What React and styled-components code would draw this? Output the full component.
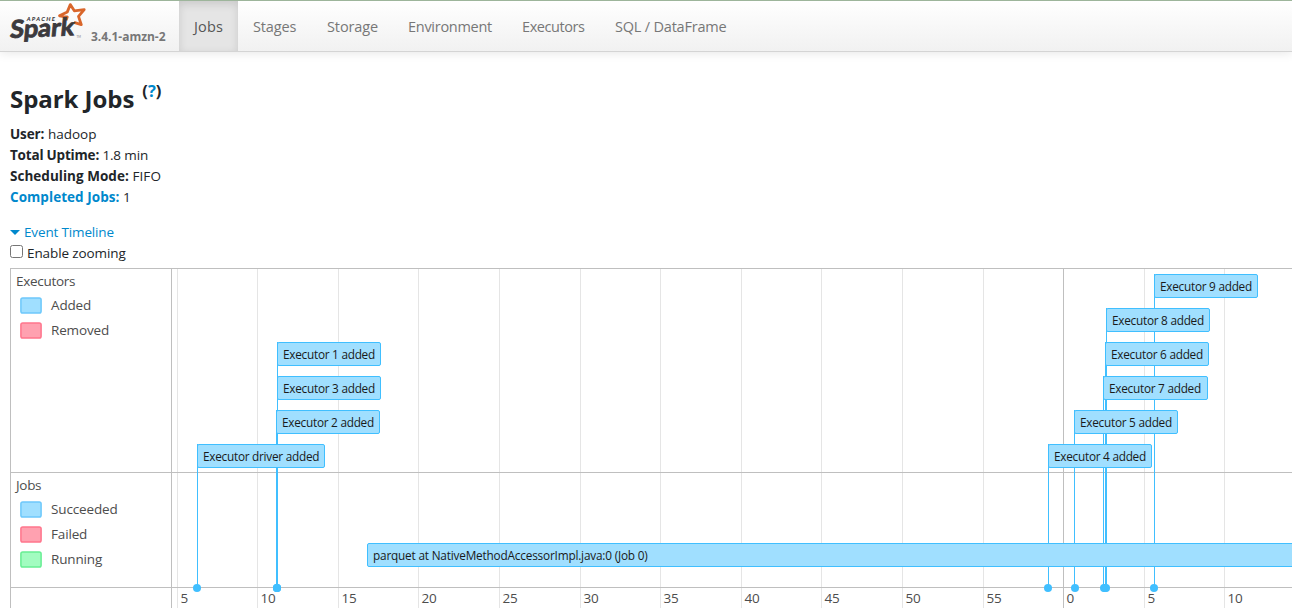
import React from 'react';
import styled, { createGlobalStyle } from 'styled-components';

const GlobalStyle = createGlobalStyle`
  * { box-sizing: border-box; }
  body {
    margin: 0;
    overflow: hidden;
    background: #fff;
    color: #212529;
    font-family: "Segoe UI", "Open Sans", "Noto Sans", sans-serif;
    font-size: 13.5px;
    line-height: 21px;
  }
`;

const Page = styled.div`
  width: 1292px;
  height: 608px;
  overflow: hidden;
`;

const Navbar = styled.nav`
  display: flex;
  height: 52px;
  border-top: 1px solid #9db59b;
  border-bottom: 1px solid #d4d4d4;
  background: linear-gradient(#fff, #f1f1f1);
  box-shadow: 0 1px 10px rgba(0, 0, 0, 0.1);
`;

const Brand = styled.div`
  display: flex;
  width: 179px;
  padding-left: 8px;
`;

const Logo = styled.svg`
  flex: none;
  width: 80px;
  height: 46px;
`;

const Version = styled.span`
  margin: 25px 0 0 3px;
  color: #777;
  font-size: 12px;
  font-weight: 700;
  letter-spacing: -0.02px;
  white-space: nowrap;
`;

const NavLink = styled.a`
  width: ${(p) => p.$width}px;
  padding: 15px 0 0 15px;
  color: ${(p) => (p.$active ? '#555' : '#777')};
  background: ${(p) => (p.$active ? '#e5e5e5' : 'transparent')};
  box-shadow: ${(p) => (p.$active ? 'inset 0 3px 8px rgba(0, 0, 0, 0.125)' : 'none')};
  font-size: 14.5px;
  letter-spacing: ${(p) => p.$track}px;
  white-space: nowrap;
`;

const Content = styled.main`
  padding: 32px 0 0 10px;
`;

const Title = styled.h3`
  display: flex;
  align-items: flex-start;
  height: 40px;
  margin: 0;
  font-size: 24px;
  font-weight: 700;
  line-height: 30px;
  letter-spacing: -0.05px;
`;

const Help = styled.sup`
  margin-left: 8px;
  font-size: 16.5px;
  line-height: 14px;
  letter-spacing: 0;
  a { color: #0088cc; }
`;

const Summary = styled.ul`
  margin: 0;
  padding: 0;
  list-style: none;
`;

const SummaryRow = styled.li`
  height: 21px;
  white-space: pre;
  letter-spacing: ${(p) => p.$track}px;
  strong { color: ${(p) => (p.$link ? '#0088cc' : 'inherit')}; letter-spacing: ${(p) => p.$bold}px; }
`;

const TimelineToggle = styled.div`
  display: flex;
  align-items: center;
  gap: 4px;
  height: 21px;
  margin-top: 14px;
  color: #0088cc;
  letter-spacing: -0.15px;
`;

const Caret = styled.span`
  border: 5px solid transparent;
  border-top-color: #0088cc;
  border-bottom: 0;
`;

const ZoomOption = styled.label`
  display: flex;
  height: 25px;
  gap: 4px;
  letter-spacing: -0.1px;
`;

const Checkbox = styled.input`
  width: 13px;
  height: 13px;
  margin: 2px 0 0;
`;

const Timeline = styled.section`
  display: grid;
  grid-template-columns: 161px 1120px;
  height: 340px;
  border-top: 1px solid #bfbfbf;
  border-left: 1px solid #bfbfbf;
`;

const Groups = styled.div`
  border-right: 1px solid #bfbfbf;
  color: #4d4d4d;
`;

const Group = styled.div`
  height: ${(p) => p.$height}px;
  padding: 2px 0 0 5px;
  border-bottom: 1px solid #bfbfbf;
  letter-spacing: -0.15px;
`;

const GroupName = styled.div`
  height: 22px;
  letter-spacing: -0.3px;
`;

const LegendRow = styled.div`
  display: flex;
  align-items: center;
  gap: 9px;
  height: 25px;
  padding-left: 4px;
`;

const tones = {
  blue: ['#a0dfff', '#6dc8fb'],
  red: ['#ffa1b0', '#ff758c'],
  green: ['#a2fcc0', '#67ee93'],
};

const Swatch = styled.svg`
  width: 22px;
  height: 17px;
  rect {
    fill: ${(p) => tones[p.$tone][0]};
    stroke: ${(p) => tones[p.$tone][1]};
    stroke-width: 1.5px;
  }
`;

const Canvas = styled.div`
  position: relative;
  overflow: hidden;
`;

const Grid = styled.div`
  position: absolute;
  inset: 0 -80px -1px 5px;
  display: flex;
`;

const Tick = styled.div`
  display: flex;
  align-items: flex-end;
  flex: none;
  width: ${(p) => p.$width}px;
  padding: 0 0 0 2.5px;
  border-left: 1px solid ${(p) => (p.$major ? '#bfbfbf' : '#e5e5e5')};
  color: #4d4d4d;
  letter-spacing: -0.3px;
`;

const Lane = styled.div`
  position: relative;
  height: ${(p) => p.$height}px;
  border-bottom: 1px solid #bfbfbf;
`;

const Stem = styled.div`
  position: absolute;
  left: ${(p) => p.$x}px;
  top: ${(p) => p.$y}px;
  width: 1px;
  height: ${(p) => 319 - p.$y}px;
  background: #40bfff;
`;

const Dot = styled.div`
  position: absolute;
  left: ${(p) => p.$x}px;
  top: 315px;
  width: 8px;
  height: 8px;
  border-radius: 50%;
  background: #40bfff;
`;

const Item = styled.div`
  position: absolute;
  left: ${(p) => p.$x}px;
  top: ${(p) => p.$y}px;
  width: ${(p) => p.$width}px;
  height: 24px;
  padding-left: 5px;
  border: 1px solid #40bfff;
  border-radius: 2px;
  background: #a0dfff;
  color: #1a1a1a;
  font-size: 11.8px;
  line-height: 23px;
  letter-spacing: ${(p) => p.$track}px;
  white-space: nowrap;
`;

const navItems = [
  ['Jobs', 59, 0.2], ['Stages', 74, -0.15], ['Storage', 81, -0.1],
  ['Environment', 114, -0.28], ['Executors', 93, -0.42], ['SQL / DataFrame', 150, -0.2],
];

const ticks = ['5', '10', '15', '20', '25', '30', '35', '40', '45', '50', '55', '0', '5', '10'];
const tickWidths = [80, 81, 80, 81, 81, 80, 81, 80, 81, 81, 80, 81, 80, 81];

const executors = [
  { id: 'driver', x: 25, y: 175, width: 128, dot: 21 },
  { id: '2', x: 104, y: 141, width: 104, dot: 101 },
  { id: '3', x: 105, y: 107, width: 104, dot: 101 },
  { id: '1', x: 105, y: 73, width: 104, dot: 101 },
  { id: '4', x: 876, y: 175, width: 104, dot: 872 },
  { id: '5', x: 902, y: 141, width: 104, dot: 899 },
  { id: '7', x: 931, y: 107, width: 105, dot: 928 },
  { id: '6', x: 933, y: 73, width: 104, dot: 929 },
  { id: '8', x: 934, y: 39, width: 104, dot: 930 },
  { id: '9', x: 982, y: 5, width: 104, dot: 978 },
];

function SparkLogo() {
  return (
    <Logo viewBox="8 1 80 46" aria-label="Apache Spark">
      <path
        d="M66 20.3 L67.3 17 L59.5 15.8 L67.3 11.9 L70.3 4.6 L74.3 10.8 L84.2 9.6 L78.5 16.4 L81.3 24.7 L74 22.4"
        fill="none" stroke="#d9662b" strokeWidth="2.8" strokeLinejoin="round"
      />
      <text
        transform="translate(9.5 38) rotate(-2.5) skewX(-8)"
        fontFamily="Lato, sans-serif" fontSize="24.5" fontWeight="700" fill="#3c3a3e"
        stroke="#3c3a3e" strokeWidth="0.9"
        textLength="64" lengthAdjust="spacingAndGlyphs"
      >Spark</text>
      <text
        transform="translate(26.5 21) skewX(-10)"
        fontFamily="Lato, sans-serif" fontSize="5.4" fontWeight="900" fill="#3c3a3e"
        textLength="28"
      >APACHE</text>
      <text x="76.5" y="37.5" fontFamily="Lato, sans-serif" fontSize="2.8" fill="#777">TM</text>
    </Logo>
  );
}

function Legend({ tone, children }) {
  return (
    <LegendRow>
      <Swatch $tone={tone}><rect x="0.9" y="0.9" width="20.2" height="15.2" rx="1.8" /></Swatch>
      {children}
    </LegendRow>
  );
}

export default function App() {
  return (
    <Page>
      <GlobalStyle />
      <Navbar>
        <Brand><SparkLogo /><Version>3.4.1-amzn-2</Version></Brand>
        {navItems.map(([label, width, track], i) => (
          <NavLink key={label} $width={width} $track={track} $active={i === 0}>{label}</NavLink>
        ))}
      </Navbar>
      <Content>
        <Title>Spark Jobs<Help>(<a>?</a>)</Help></Title>
        <Summary>
          <SummaryRow $track={0} $bold={-0.1}><strong>User:</strong> hadoop</SummaryRow>
          <SummaryRow $track={-0.15} $bold={-0.2}><strong>Total Uptime:</strong> 1.8 min</SummaryRow>
          <SummaryRow $track={0.1} $bold={0.03}><strong>Scheduling Mode:</strong> FIFO</SummaryRow>
          <SummaryRow $track={0} $bold={0.05} $link><strong>Completed Jobs:</strong> 1</SummaryRow>
        </Summary>
        <TimelineToggle><Caret />Event Timeline</TimelineToggle>
        <ZoomOption><Checkbox type="checkbox" />Enable zooming</ZoomOption>
        <Timeline>
          <Groups>
            <Group $height={204}>
              <GroupName>Executors</GroupName>
              <Legend tone="blue">Added</Legend>
              <Legend tone="red">Removed</Legend>
            </Group>
            <Group $height={115}>
              <GroupName>Jobs</GroupName>
              <Legend tone="blue">Succeeded</Legend>
              <Legend tone="red">Failed</Legend>
              <Legend tone="green">Running</Legend>
            </Group>
          </Groups>
          <Canvas>
            <Grid>
              {ticks.map((t, i) => <Tick key={i} $width={tickWidths[i]} $major={i === 11}>{t}</Tick>)}
            </Grid>
            <Lane $height={204} />
            <Lane $height={115} />
            {executors.map((e) => <Stem key={e.id} $x={e.x} $y={e.y} />)}
            {executors.map((e) => <Dot key={e.id} $x={e.dot} />)}
            {executors.map((e) => (
              <Item key={e.id} $x={e.x} $y={e.y} $width={e.width} $track={-0.26}>Executor {e.id} added</Item>
            ))}
            <Item $x={195} $y={274} $width={940} $track={-0.19}>parquet at NativeMethodAccessorImpl.java:0 (Job 0)</Item>
          </Canvas>
        </Timeline>
      </Content>
    </Page>
  );
}
